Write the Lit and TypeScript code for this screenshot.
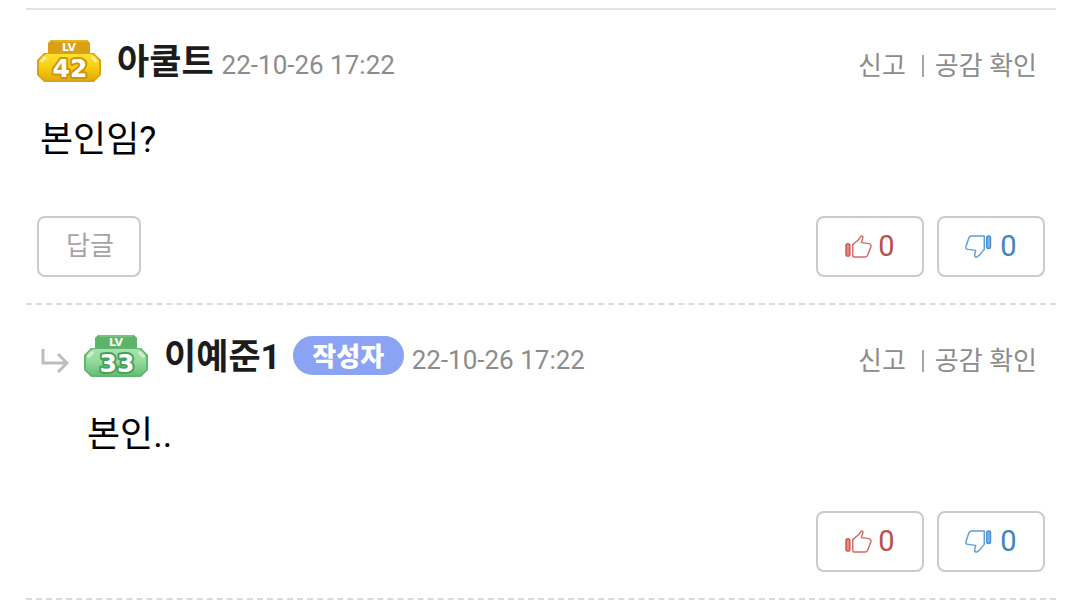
import { LitElement, html, css, svg, nothing } from "lit";
import { customElement, property } from "lit/decorators.js";

interface Comment {
  author: string;
  level: number;
  tone: "gold" | "green";
  date: string;
  text: string;
  reply: boolean;
  writer: boolean;
  up: number;
  down: number;
}

const comments: Comment[] = [
  { author: "아쿨트", level: 42, tone: "gold", date: "22-10-26 17:22", text: "본인임?", reply: false, writer: false, up: 0, down: 0 },
  { author: "이예준1", level: 33, tone: "green", date: "22-10-26 17:22", text: "본인..", reply: true, writer: true, up: 0, down: 0 },
];

const tones = {
  gold: { top: "#dba016", light: "#fbe233", mid: "#f7cf12", low: "#e3ab08", edge: "#d9a516", digit: "#cf930c" },
  green: { top: "#5cb46b", light: "#a6e3aa", mid: "#93da9b", low: "#68be75", edge: "#62b670", digit: "#46a05a" },
};

@customElement("level-badge")
class LevelBadge extends LitElement {
  @property({ type: Number }) level = 1;
  @property() tone: "gold" | "green" = "gold";

  static styles = css`
    :host { display: block; flex: none; }
    .badge { display: block; width: 64px; height: 44px; }
    .lv { font: bold 11px "DejaVu Sans", sans-serif; fill: #fff; }
    .num { font: bold 25px "DejaVu Sans", sans-serif; fill: #fff; stroke-width: 4px; paint-order: stroke; stroke-linejoin: round; }
  `;

  render() {
    const t = tones[this.tone];
    return html`<svg class="badge" viewBox="0 0 64 44" role="img" aria-label="LV ${this.level}">
      <defs>
        <linearGradient id="body" x1="0" y1="0" x2="0" y2="1">
          <stop offset="0" stop-color=${t.light}></stop>
          <stop offset="0.5" stop-color=${t.mid}></stop>
          <stop offset="1" stop-color=${t.low}></stop>
        </linearGradient>
      </defs>
      ${svg`
        <path d="M14 1H50L53 4V20H11V4Z" fill=${t.top}/>
        <path d="M15 2H49" stroke=${t.light} stroke-opacity=".35" stroke-width="2"/>
        <path d="M7 14H57L60 17L64 21V36L60 40L57 43H7L4 40L0 36V21L4 17Z" fill=${t.edge}/>
        <path d="M9 15H55L59 18L62 22V35L59 39L55 41H9L5 39L2 35V22L5 18Z" fill="url(#body)"/>
        <path d="M4 23L9 18M55 18L60 23" stroke="#fff" stroke-opacity=".55" stroke-width="3"/>
        <text class="lv" x="32" y="12" text-anchor="middle">LV</text>
        <text class="num" x="33" y="38" text-anchor="middle" stroke=${t.digit}>${this.level}</text>
      `}
    </svg>`;
  }
}

@customElement("vote-button")
class VoteButton extends LitElement {
  @property() kind: "up" | "down" = "up";
  @property({ type: Number }) count = 0;

  static styles = css`
    :host { display: block; }
    .vote {
      box-sizing: border-box; width: 108px; height: 61px; padding: 0 0 2px;
      display: flex; align-items: center; justify-content: center; gap: 6px;
      background: #fff; border: 2px solid #cbcbcb; border-radius: 8px;
      font: 29px/52px Roboto, sans-serif; cursor: pointer;
    }
    .up { color: #b9504e; }
    .down { color: #4385b8; gap: 8px; }
    .icon { display: block; width: 27px; height: 25px; margin-top: 2px; }
  `;

  render() {
    const up = this.kind === "up";
    const icon = up
      ? svg`<rect x="1" y="10" width="4" height="13" rx="2" fill="#ea8582" stroke="#cf5554" stroke-width="1.5"/>
          <path d="M8 11L14 6L17 2Q19 2 18.500 4L17 9L25 10Q27.500 11 27 13L23.500 22Q23 24 21 24H10Q8 24 8 22Z" fill="none" stroke="#d36a68" stroke-width="1.5" stroke-linejoin="round"/>`
      : svg`<rect x="22.500" y="2" width="4" height="13" rx="2" fill="#79b3e8" stroke="#4a90cb" stroke-width="1.5"/>
          <path d="M20 2H7Q5 2 4 4L1 13Q0.500 16 3 16L11 17L10 22Q10 24 12 24L15 22L20 16Z" fill="none" stroke="#5c9fd6" stroke-width="1.5" stroke-linejoin="round"/>`;
    return html`<button class="vote ${this.kind}" type="button" aria-label="${up ? "공감" : "비공감"} ${this.count}">
      <svg class="icon" viewBox="0 0 28 26" aria-hidden="true">${icon}</svg>
      <span>${this.count}</span>
    </button>`;
  }
}

@customElement("app-root")
class AppRoot extends LitElement {
  static styles = css`
    :host { display: block; background: #fff; font-family: Roboto, "Noto Sans CJK KR", sans-serif; color: #000; }
    .list { margin: 8px 24px 0 26px; border-top: 2px solid #e2e2e2; }
    .comment { padding: 28px 11px 26px; border-bottom: 2px dashed #dadada; }
    .head { display: flex; align-items: center; height: 48px; }
    level-badge { margin: 0 0 3px; }
    .arrow { flex: none; width: 28px; height: 26px; margin: 6px 15px 0 4px; }
    .name { margin: 2px 0 0 16px; font-size: 35px; line-height: 48px; font-weight: 700; color: #1c1c1c; white-space: nowrap; }
    .writer {
      margin: 0 0 3px 12px; width: 111px; height: 39px; border-radius: 20px; background: #8aa3f3; color: #fff;
      font: 900 26px/37px "Noto Sans CJK KR", sans-serif; text-align: center; white-space: nowrap;
    }
    .date { margin: 6px 0 0 8px; font-size: 26px; line-height: 36px; color: #8c8c8c; white-space: nowrap; }
    .links { margin: 7px 8px 0 auto; display: flex; align-items: center; font-size: 26px; line-height: 36px; white-space: nowrap; }
    .link { color: #8c8c8c; text-decoration: none; }
    .bar { width: 2px; height: 22px; margin: 0 11px 0 16px; background: #a5a5a5; }
    .text { margin: 30px 3px 52px; font-size: 36px; line-height: 48px; }
    .reply .text { margin-left: 50px; }
    .actions { display: flex; align-items: center; gap: 13px; }
    .answer {
      box-sizing: border-box; width: 104px; height: 61px; padding: 0 0 2px 2px; border: 2px solid #cbcbcb; border-radius: 8px;
      background: #fff; color: #a5a5a5; font: 26px/52px Roboto, "Noto Sans CJK KR", sans-serif; cursor: pointer;
    }
    .votes { display: flex; gap: 13px; margin-left: auto; }
  `;

  render() {
    return html`<main class="list">${comments.map(
      (c) => html`<article class="comment ${c.reply ? "reply" : ""}">
        <header class="head">
          ${c.reply
            ? html`<svg class="arrow" viewBox="0 0 28 26" aria-hidden="true">
                <path d="M2 2V16H25M17 7L26 16L17 25" fill="none" stroke="#bdbdbd" stroke-width="3"></path>
              </svg>`
            : nothing}
          <level-badge .level=${c.level} .tone=${c.tone}></level-badge>
          <span class="name">${c.author}</span>
          ${c.writer ? html`<span class="writer">작성자</span>` : nothing}
          <time class="date">${c.date}</time>
          <nav class="links">
            <a class="link" href="#report">신고</a><span class="bar"></span><a class="link" href="#likes">공감 확인</a>
          </nav>
        </header>
        <p class="text">${c.text}</p>
        <div class="actions">
          ${c.reply ? nothing : html`<button class="answer" type="button">답글</button>`}
          <div class="votes">
            <vote-button kind="up" .count=${c.up}></vote-button>
            <vote-button kind="down" .count=${c.down}></vote-button>
          </div>
        </div>
      </article>`
    )}</main>`;
  }
}
